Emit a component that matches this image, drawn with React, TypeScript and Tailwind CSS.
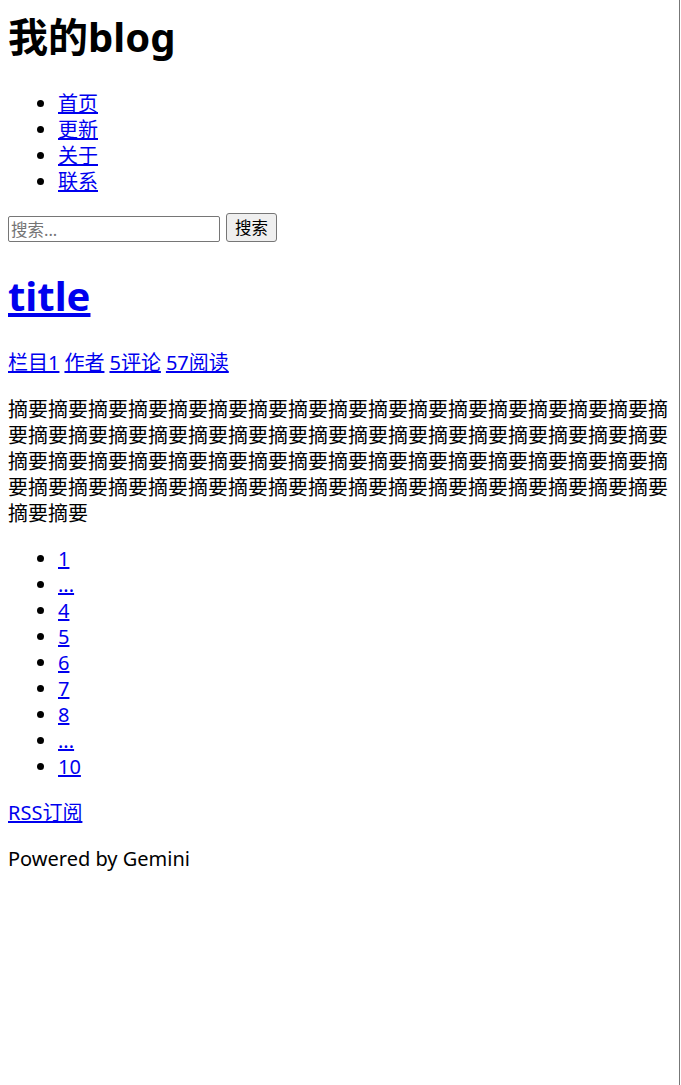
const nav = ['首页', '更新', '关于', '联系']
const pages = ['1', '...', '4', '5', '6', '7', '8', '...', '10']
const meta = ['栏目1', '作者', '5评论', '57阅读']

export default function App() {
  const summary = '摘要'.repeat(68)

  return (
    <div className="min-h-screen w-[680px] border-r border-[#777] bg-white font-['Noto_Sans','Noto_Sans_CJK_SC',sans-serif] text-[20px] leading-[26px] text-black">
      <div className="px-[8px] pt-[11px] pb-[8px]">
        <h1 className="text-[40px] font-bold leading-[52px]">我的blog</h1>

        <ul className="mt-[28px] list-disc pl-[50px]">
          {nav.map((item) => (
            <li key={item}>
              <a href="#" className="text-[#0000ee] underline">
                {item}
              </a>
            </li>
          ))}
        </ul>

        <form className="mt-[16px] flex h-[31px] items-end gap-[6px]" onSubmit={(e) => e.preventDefault()}>
          <input
            type="text"
            placeholder="搜索..."
            className="h-[26px] w-[212px] rounded-[2px] border border-[#767676] px-[2px] text-[16.5px] leading-[20px] placeholder:text-[#757575]"
          />
          <button
            type="submit"
            className="h-[29px] rounded-[3px] border border-[#767676] bg-[#efefef] px-[8px] text-[16.5px] leading-[20px]"
          >
            搜索
          </button>
        </form>

        <h2 className="mt-[28px] text-[40px] font-bold leading-[52px]">
          <a href="#" className="text-[#0000ee] underline">
            title
          </a>
        </h2>

        <p className="mt-[28px] flex gap-[5px]">
          {meta.map((m) => (
            <a key={m} href="#" className="text-[#0000ee] underline">
              {m}
            </a>
          ))}
        </p>

        <p className="mt-[21px] break-all">{summary}</p>

        <ul className="mt-[19px] list-disc pl-[50px]">
          {pages.map((p, i) => (
            <li key={i}>
              <a href="#" className="text-[#0000ee] underline">
                {p}
              </a>
            </li>
          ))}
        </ul>

        <p className="mt-[20px]">
          <a href="#" className="text-[#0000ee] underline">
            RSS订阅
          </a>
        </p>

        <p className="mt-[20px]">Powered by Gemini</p>
      </div>
    </div>
  )
}
